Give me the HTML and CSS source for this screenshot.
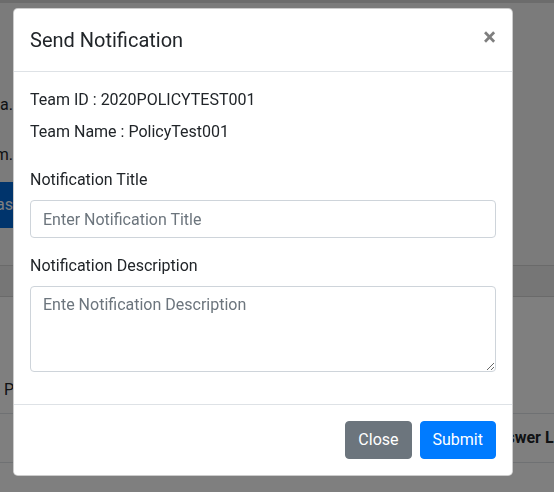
FILE: index.html
```html
<!DOCTYPE html>
<html lang="en">
<head>
<meta charset="utf-8">
<title>Send Notification</title>
<link rel="stylesheet" href="styles.css">
</head>
<body>
<div class="page">
  <div class="topbar"></div>
  <section class="hero">
    <div class="clip">
      <p class="hero-line">Policy data.</p>
      <p class="hero-line second">Team item.</p>
      <span class="btn-blue">Add tas</span>
    </div>
  </section>
  <div class="band"></div>
  <section class="list">
    <p class="list-title">P</p>
    <div class="table-head">
      <div class="clip head-left"><b>Disco</b></div>
      <div class="head-right"><b>Answer Link</b></div>
    </div>
  </section>
</div>

<div class="backdrop"></div>

<div class="modal">
  <div class="modal-header">
    <h5 class="modal-title">Send Notification</h5>
    <button class="close" type="button" aria-label="Close">&times;</button>
  </div>
  <div class="modal-body">
    <p class="info">Team ID : 2020POLICYTEST001</p>
    <p class="info">Team Name : PolicyTest001</p>
    <div class="form-group">
      <label class="form-label" for="title">Notification Title</label>
      <input class="form-control" id="title" type="text" placeholder="Enter Notification Title">
    </div>
    <div class="form-group">
      <label class="form-label" for="desc">Notification Description</label>
      <textarea class="form-control textarea" id="desc" rows="3" placeholder="Ente Notification Description"></textarea>
    </div>
  </div>
  <div class="modal-footer">
    <button class="btn btn-secondary" type="button">Close</button>
    <button class="btn btn-primary" type="button">Submit</button>
  </div>
</div>
</body>
</html>
```

FILE: styles.css
```css
* { box-sizing: border-box; }
html, body { margin: 0; padding: 0; }
body {
  width: 554px;
  height: 492px;
  overflow: hidden;
  font-family: Roboto, "Liberation Sans", sans-serif;
  font-size: 16px;
  line-height: 1.5;
  color: #212529;
  background: #fff;
}

/* background page */
.page { display: flex; flex-direction: column; }
.topbar { height: 3px; background: #d8d8d8; }
.hero {
  height: 262px;
  background: #f6f6f6;
  padding-top: 90px;
}
.clip {
  width: 13px;
  overflow: hidden;
  display: flex;
  flex-direction: column;
  align-items: flex-end;
  white-space: nowrap;
}
.hero-line { margin: 0; line-height: 24px; }
.hero-line.second { margin-top: 26px; }
.btn-blue {
  margin-top: 15px;
  height: 46px;
  line-height: 46px;
  padding: 0 0 0 16px;
  background: #0069d9;
  color: #fff;
  font-size: 16px;
  white-space: nowrap;
}
.band {
  height: 32px;
  background: #ececec;
  border-top: 1px solid #d4d4d4;
  border-bottom: 1px solid #d4d4d4;
}
.list { background: #fff; padding-top: 81px; }
.list-title { margin: 0 0 11px 4px; line-height: 24px; }
.table-head {
  display: flex;
  border-top: 1px solid #dee2e6;
  border-bottom: 1px solid #dee2e6;
  height: 50px;
  align-items: center;
}
.head-left { width: 13px; }
.head-right { margin-left: 487px; white-space: nowrap; }

.backdrop {
  position: fixed;
  inset: 0;
  background: rgba(0, 0, 0, 0.5);
}

/* modal */
.modal {
  position: absolute;
  top: 8px;
  left: 13px;
  width: 500px;
  background: #fff;
  border: 1px solid rgba(0, 0, 0, 0.2);
  border-radius: 4.8px;
  display: flex;
  flex-direction: column;
}
.modal-header {
  display: flex;
  align-items: flex-start;
  justify-content: space-between;
  padding: 16px;
  border-bottom: 1px solid #dee2e6;
}
.modal-title {
  margin: 0;
  font-size: 20px;
  font-weight: 400;
  line-height: 30px;
}
.close {
  padding: 16px;
  margin: -16px -16px -16px auto;
  background: transparent;
  border: 0;
  font-family: Roboto, "Liberation Sans", sans-serif;
  font-size: 24px;
  font-weight: 700;
  line-height: 1;
  color: #000;
  opacity: 0.5;
  cursor: pointer;
}
.modal-body { padding: 16px; }
.info { margin: 0 0 8px; }
.info + .info { margin-bottom: 24px; }
.form-group { margin-bottom: 16px; }
.form-label { display: inline-block; margin-bottom: 8px; }
.form-control {
  display: block;
  width: 100%;
  height: 38px;
  padding: 6px 12px;
  font-family: Roboto, "Liberation Sans", sans-serif;
  font-size: 16px;
  line-height: 1.5;
  color: #495057;
  background: #fff;
  border: 1px solid #ced4da;
  border-radius: 4px;
}
.form-control::placeholder { color: #6c757d; opacity: 1; }
.textarea { height: 86px; resize: vertical; }
.modal-footer {
  display: flex;
  justify-content: flex-end;
  align-items: center;
  padding: 12px;
  border-top: 1px solid #dee2e6;
}
.btn {
  margin: 4px;
  height: 38px;
  padding: 6px 12px;
  font-family: Roboto, "Liberation Sans", sans-serif;
  font-size: 16px;
  line-height: 1.5;
  border: 1px solid transparent;
  border-radius: 4px;
  color: #fff;
  cursor: pointer;
}
.btn-secondary { background: #6c757d; border-color: #6c757d; }
.btn-primary { background: #007bff; border-color: #007bff; }
```
